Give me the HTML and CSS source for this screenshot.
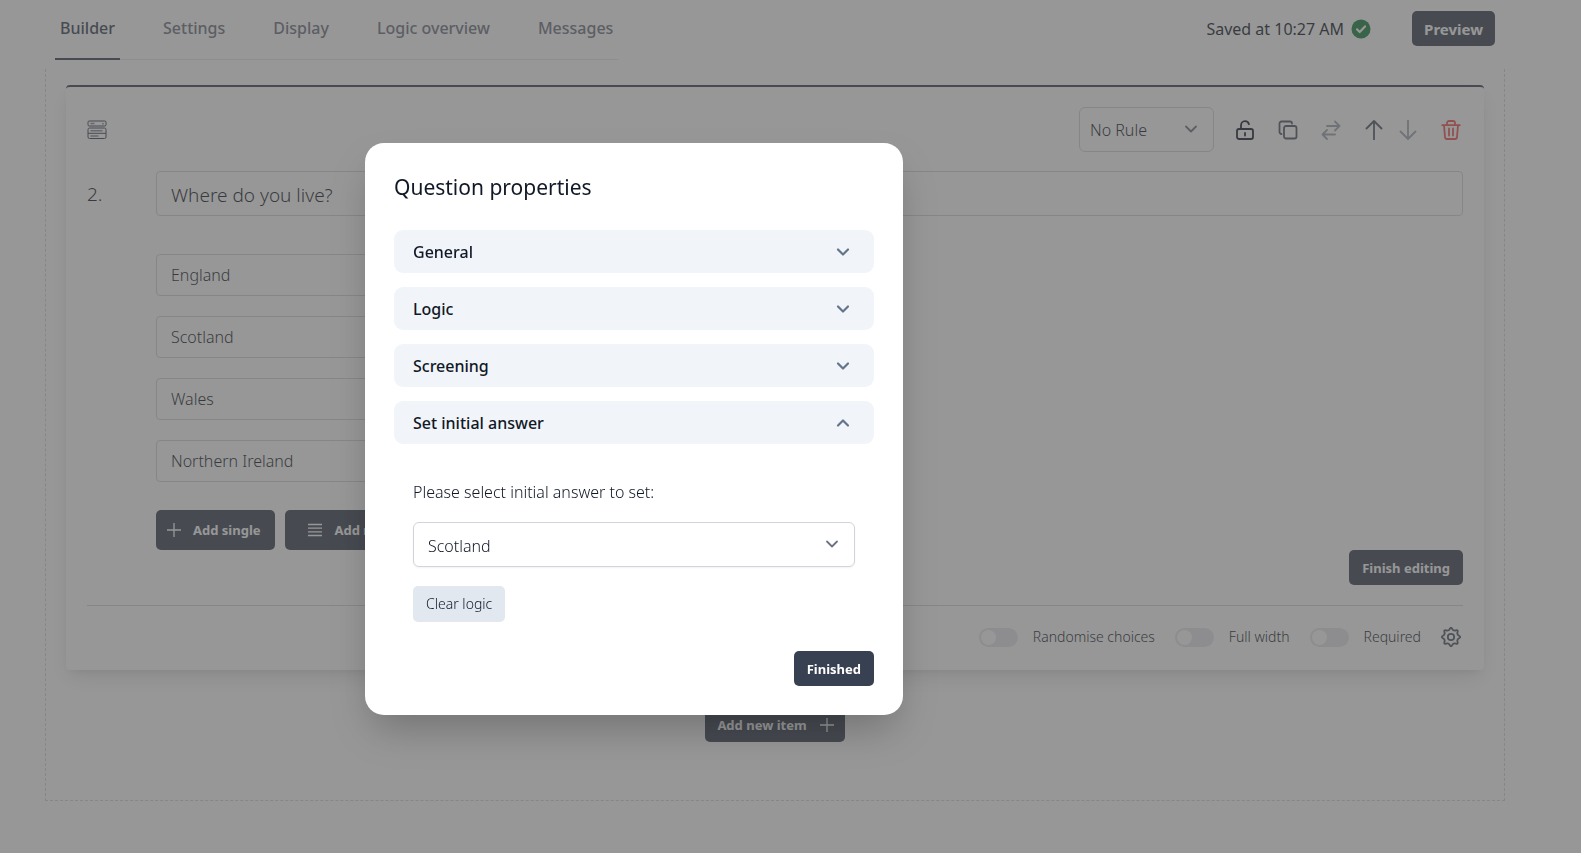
FILE: index.html
```html
<!DOCTYPE html>
<html lang="en">
<head>
<meta charset="utf-8">
<title>Survey builder</title>
<link rel="stylesheet" href="styles.css">
</head>
<body>
<header class="topbar">
  <nav class="tabs">
    <a class="tab tab-active" href="#builder">Builder</a>
    <a class="tab" href="#settings">Settings</a>
    <a class="tab" href="#display">Display</a>
    <a class="tab" href="#logic">Logic overview</a>
    <a class="tab" href="#messages">Messages</a>
  </nav>
  <div class="status">
    <span class="saved">Saved at 10:27 AM</span>
    <svg class="saved-icon" viewBox="0 0 20 20"><circle cx="10" cy="10" r="9.5" fill="#15803d"/><path d="M6 10.300l2.700 2.700 5.300-5.600" fill="none" stroke="#fff" stroke-width="2.200" stroke-linecap="round" stroke-linejoin="round"/></svg>
    <button class="btn btn-preview" type="button">Preview</button>
  </div>
</header>

<main class="canvas">
  <section class="card">
    <div class="toolbar">
      <svg class="type-icon" viewBox="0 0 20 20" fill="none" stroke="currentColor"><rect x="1" y="1" width="18" height="5" rx="1.200"/><rect x="1" y="8" width="18" height="10.500" rx="1.500"/><path d="M1 13.300h18"/><path d="M3.500 3.500h4M16 3v1.500M3.500 10.700h12M3.500 16h8" stroke-width="1.600" opacity=".6"/></svg>
      <div class="tools">
        <div class="select-box rule-box">
          <select class="select rule-select" aria-label="Rule"><option>No Rule</option></select>
          <svg class="select-arrow" viewBox="0 0 14 14"><path d="M2 4.500l5 5 5-5"/></svg>
        </div>
        <button class="tool tool-dark" type="button" aria-label="Lock"><svg viewBox="0 0 20 20"><rect x="2" y="9" width="16" height="10" rx="2"/><path d="M6 9V5.500C6 3 7.700 1.200 10 1.200c2 0 3.500 1.200 3.900 3M10 13v2.500"/></svg></button>
        <button class="tool tool-mid" type="button" aria-label="Duplicate"><svg viewBox="0 0 20 20"><rect x="6" y="6" width="12.500" height="12.500" rx="2"/><path d="M3.500 14A2 2 0 0 1 1.500 12V3.500a2 2 0 0 1 2-2H12a2 2 0 0 1 2 2"/></svg></button>
        <button class="tool tool-light" type="button" aria-label="Swap"><svg viewBox="0 0 20 20"><path d="M6 6h12.500M14 1.500L18.500 6 14 10.500M14 14.500H1.500M6 10l-4.500 4.500L6 19"/></svg></button>
        <div class="tool-pair">
          <button class="tool tool-mid" type="button" aria-label="Move up"><svg viewBox="0 0 20 20"><path d="M10 19.500V1M2.500 8.500L10 1l7.500 7.500"/></svg></button>
          <button class="tool tool-light" type="button" aria-label="Move down"><svg viewBox="0 0 20 20"><path d="M10 .5V19M2.500 11.500L10 19l7.500-7.500"/></svg></button>
        </div>
        <button class="tool tool-red" type="button" aria-label="Delete"><svg viewBox="0 0 20 20"><path d="M1.200 5.200h17.600M3 5.200l1 12a2 2 0 0 0 2 1.800h8a2 2 0 0 0 2-1.800l1-12M6 5V3a2 2 0 0 1 2-2h4a2 2 0 0 1 2 2v2M8 8.500v7M12 8.500v7"/></svg></button>
      </div>
    </div>

    <div class="question">
      <label class="number" for="question">2.</label>
      <input class="field field-question" id="question" type="text" value="Where do you live?">
    </div>

    <div class="answers">
      <input class="field" type="text" aria-label="Answer 1" value="England">
      <input class="field" type="text" aria-label="Answer 2" value="Scotland">
      <input class="field" type="text" aria-label="Answer 3" value="Wales">
      <input class="field" type="text" aria-label="Answer 4" value="Northern Ireland">
    </div>

    <div class="actions">
      <div class="add-buttons">
        <button class="btn btn-add" type="button"><svg class="btn-icon" viewBox="0 0 16 16"><path d="M8 1v14M1 8h14"/></svg>Add single</button>
        <button class="btn btn-add btn-add-many" type="button"><svg class="btn-icon" viewBox="0 0 16 16"><path d="M1 2.500h14M1 6.200h14M1 9.900h14M1 13.500h14"/></svg>Add multiple</button>
      </div>
      <button class="btn" type="button">Finish editing</button>
    </div>

    <div class="options">
      <label class="option"><input class="toggle" type="checkbox">Randomise choices</label>
      <label class="option"><input class="toggle" type="checkbox">Full width</label>
      <label class="option"><input class="toggle" type="checkbox">Required</label>
      <button class="tool tool-mid" type="button" aria-label="Question properties"><svg viewBox="0 0 20 20"><circle cx="10" cy="10" r="3.200"/><path d="M18.050 8.820Q20.400 10 18.050 11.180Q15.700 12.360 16.530 14.860Q17.350 17.350 14.860 16.530Q12.360 15.700 11.180 18.050Q10 20.400 8.820 18.050Q7.640 15.700 5.140 16.530Q2.650 17.350 3.470 14.860Q4.300 12.360 1.950 11.180Q-.4 10 1.950 8.820Q4.300 7.640 3.470 5.140Q2.650 2.650 5.140 3.470Q7.640 4.300 8.820 1.950Q10 -.4 11.180 1.950Q12.360 4.300 14.860 3.470Q17.350 2.650 16.530 5.140Q15.700 7.640 18.050 8.820Z"/></svg></button>
    </div>
  </section>

  <button class="btn btn-new" type="button">Add new item<svg class="btn-icon" viewBox="0 0 16 16"><path d="M8 1v14M1 8h14"/></svg></button>
</main>

<div class="overlay">
  <section class="dialog" role="dialog" aria-modal="true" aria-labelledby="dialog-title">
    <h2 class="dialog-title" id="dialog-title">Question properties</h2>
    <div class="accordion">
      <button class="panel" type="button" aria-expanded="false">General<svg class="chevron" viewBox="0 0 14 14"><path d="M2 4.500l5 5 5-5"/></svg></button>
      <button class="panel" type="button" aria-expanded="false">Logic<svg class="chevron" viewBox="0 0 14 14"><path d="M2 4.500l5 5 5-5"/></svg></button>
      <button class="panel" type="button" aria-expanded="false">Screening<svg class="chevron" viewBox="0 0 14 14"><path d="M2 4.500l5 5 5-5"/></svg></button>
      <button class="panel" type="button" aria-expanded="true">Set initial answer<svg class="chevron" viewBox="0 0 14 14"><path d="M2 9.500l5-5 5 5"/></svg></button>
    </div>
    <div class="panel-body">
      <label class="prompt" for="initial">Please select initial answer to set:</label>
      <div class="select-box">
        <select class="select" id="initial"><option>Scotland</option></select>
        <svg class="select-arrow" viewBox="0 0 14 14"><path d="M2 4.500l5 5 5-5"/></svg>
      </div>
      <button class="btn btn-clear" type="button">Clear logic</button>
    </div>
    <div class="dialog-footer">
      <button class="btn" type="button">Finished</button>
    </div>
  </section>
</div>
</body>
</html>
```
FILE: styles.css
```css
* {
  box-sizing: border-box;
}

body {
  margin: 0;
  min-height: 100vh;
  background: #fff;
  color: #111827;
  font: 300 16px/24px "Noto Sans", "Open Sans", sans-serif;
}

button,
input,
select {
  font: inherit;
  color: inherit;
  margin: 0;
}

/* Top bar */
.topbar {
  display: flex;
  justify-content: space-between;
  align-items: flex-start;
  height: 69px;
  padding: 0 86px 0 55px;
}

.tabs {
  display: flex;
  gap: 38px;
  height: 60px;
  box-shadow: inset 0 -1px #e5e7eb;
}

.tab {
  padding: 16px 5px 0;
  color: #6b7280;
  font-weight: 500;
  text-decoration: none;
}

.tab-active {
  color: #374151;
  border-bottom: 2px solid #374151;
}

.status {
  display: flex;
  align-items: center;
  padding-top: 11px;
}

.saved {
  font-weight: 400;
}

.saved-icon {
  width: 20px;
  height: 20px;
  margin: 0 41px 0 7px;
}

/* Buttons */
.btn {
  display: inline-flex;
  align-items: center;
  justify-content: center;
  height: 35px;
  padding: 0 13px;
  border: 0;
  border-radius: 5px;
  background: #374151;
  color: #fff;
  font-size: 13px;
  font-weight: 700;
  line-height: 20px;
}

.btn-preview {
  padding: 0 12px;
  font-size: 15px;
}

.btn-icon {
  width: 16px;
  height: 16px;
  fill: none;
  stroke: currentColor;
  stroke-width: 1.3;
}

.btn-add {
  height: 40px;
  padding: 0 14px 0 10px;
  gap: 11px;
}

.btn-add-many {
  padding: 0 22px;
  gap: 12px;
}

.btn-clear {
  height: 36px;
  background: #e2e8f0;
  color: #111827;
  font-size: 14px;
  font-weight: 300;
}

.btn-new {
  margin: 37px auto 0;
  padding: 0 10px 0 12px;
  gap: 12px;
}

/* Canvas and question card */
.canvas {
  display: flex;
  flex-direction: column;
  margin: 0 76px 0 45px;
  padding: 16px 20px 58px;
  border: 1px dashed #d1d5db;
  border-top: 0;
}

.card {
  padding: 20px 21px 23px;
  border-top: 2px solid #374151;
  border-radius: 4px;
  box-shadow: 0 10px 20px -3px rgba(0, 0, 0, .12), 0 4px 8px -4px rgba(0, 0, 0, .1);
}

.toolbar,
.tools,
.tool-pair,
.question,
.add-buttons,
.options,
.option {
  display: flex;
  align-items: center;
}

.toolbar,
.actions {
  display: flex;
  justify-content: space-between;
}

.type-icon {
  width: 20px;
  height: 20px;
  color: #374151;
}

.tools {
  gap: 23px;
}

.tool-pair {
  gap: 14px;
}

.tool {
  width: 20px;
  height: 20px;
  padding: 0;
  border: 0;
  background: none;
}

.tool svg {
  display: block;
  width: 20px;
  height: 20px;
  fill: none;
  stroke: currentColor;
  stroke-width: 1.8;
  stroke-linecap: round;
  stroke-linejoin: round;
}

.tools .tool:last-child {
  margin-right: 2px;
}

.tool-pair .tool:last-child {
  margin-right: 0;
}

.tool-dark {
  color: #111827;
}

.tool-mid {
  color: #4b5563;
}

.tool-light {
  color: #9ca3af;
}

.tool-red {
  color: #f05252;
}

.select-box {
  position: relative;
}

.select {
  display: block;
  width: 100%;
  height: 45px;
  padding: 2px 40px 0 14px;
  appearance: none;
  border: 1px solid #d1d5db;
  border-radius: 6px;
  background: #fff;
  box-shadow: 0 1px 2px rgba(0, 0, 0, .05);
}

.select-arrow {
  position: absolute;
  right: 16px;
  top: 15px;
  width: 14px;
  height: 14px;
  pointer-events: none;
}

.select-arrow path,
.chevron path {
  fill: none;
  stroke: #6b7280;
  stroke-width: 1.8;
  stroke-linecap: round;
  stroke-linejoin: round;
}

.rule-box {
  width: 135px;
  margin-right: -2px;
}

.rule-select {
  padding: 0 40px 0 10px;
  box-shadow: none;
}

.question {
  margin-top: 19px;
}

.number {
  width: 69px;
  font-size: 19px;
}

.field {
  width: 100%;
  height: 42px;
  padding: 0 14px;
  border: 1px solid #d1d5db;
  border-radius: 4px;
  background: #fff;
}

.field-question {
  flex: 1;
  height: 45px;
  padding-top: 2px;
  font-size: 19px;
}

.answers {
  display: grid;
  gap: 20px;
  width: 600px;
  margin: 38px 0 0 69px;
}

.actions {
  align-items: flex-end;
  height: 103px;
  margin-left: 69px;
}

.add-buttons {
  gap: 10px;
  align-self: flex-start;
  margin-top: 28px;
}

.options {
  justify-content: flex-end;
  gap: 20px;
  margin-top: 20px;
  padding: 21px 2px 0 0;
  border-top: 1px solid #d1d5db;
}

.option {
  gap: 15px;
  font-size: 14px;
  line-height: 20px;
}

.toggle {
  display: flex;
  align-items: center;
  width: 39px;
  height: 19px;
  padding: 2px;
  appearance: none;
  border-radius: 10px;
  background: #e5e7eb;
}

.toggle::before {
  content: "";
  width: 15px;
  height: 15px;
  border-radius: 50%;
  background: #fff;
}

/* Dialog */
.overlay {
  position: fixed;
  inset: 0;
  padding: 143px 0 0 365px;
  background: rgba(82, 82, 82, .6);
}

.dialog {
  width: 538px;
  padding: 29px;
  border-radius: 19px;
  background: #fff;
  box-shadow: 0 20px 40px -8px rgba(0, 0, 0, .25);
}

.dialog-title {
  margin: 0 0 28px;
  color: #111827;
  font-size: 21px;
  font-weight: 400;
  line-height: 30px;
}

.accordion {
  display: grid;
  gap: 14px;
}

.panel {
  display: flex;
  align-items: center;
  justify-content: space-between;
  height: 43px;
  padding: 1px 24px 0 19px;
  border: 0;
  border-radius: 9px;
  background: #f1f5f9;
  color: #111827;
  font-weight: 500;
}

.chevron {
  width: 14px;
  height: 14px;
}

.chevron path {
  stroke: #64748b;
  stroke-width: 2.2;
}

.panel-body {
  padding: 36px 19px 29px;
}

.prompt {
  display: block;
  margin-bottom: 18px;
}

.panel-body .btn {
  margin-top: 19px;
}

.dialog-footer {
  display: flex;
  justify-content: flex-end;
}
```
